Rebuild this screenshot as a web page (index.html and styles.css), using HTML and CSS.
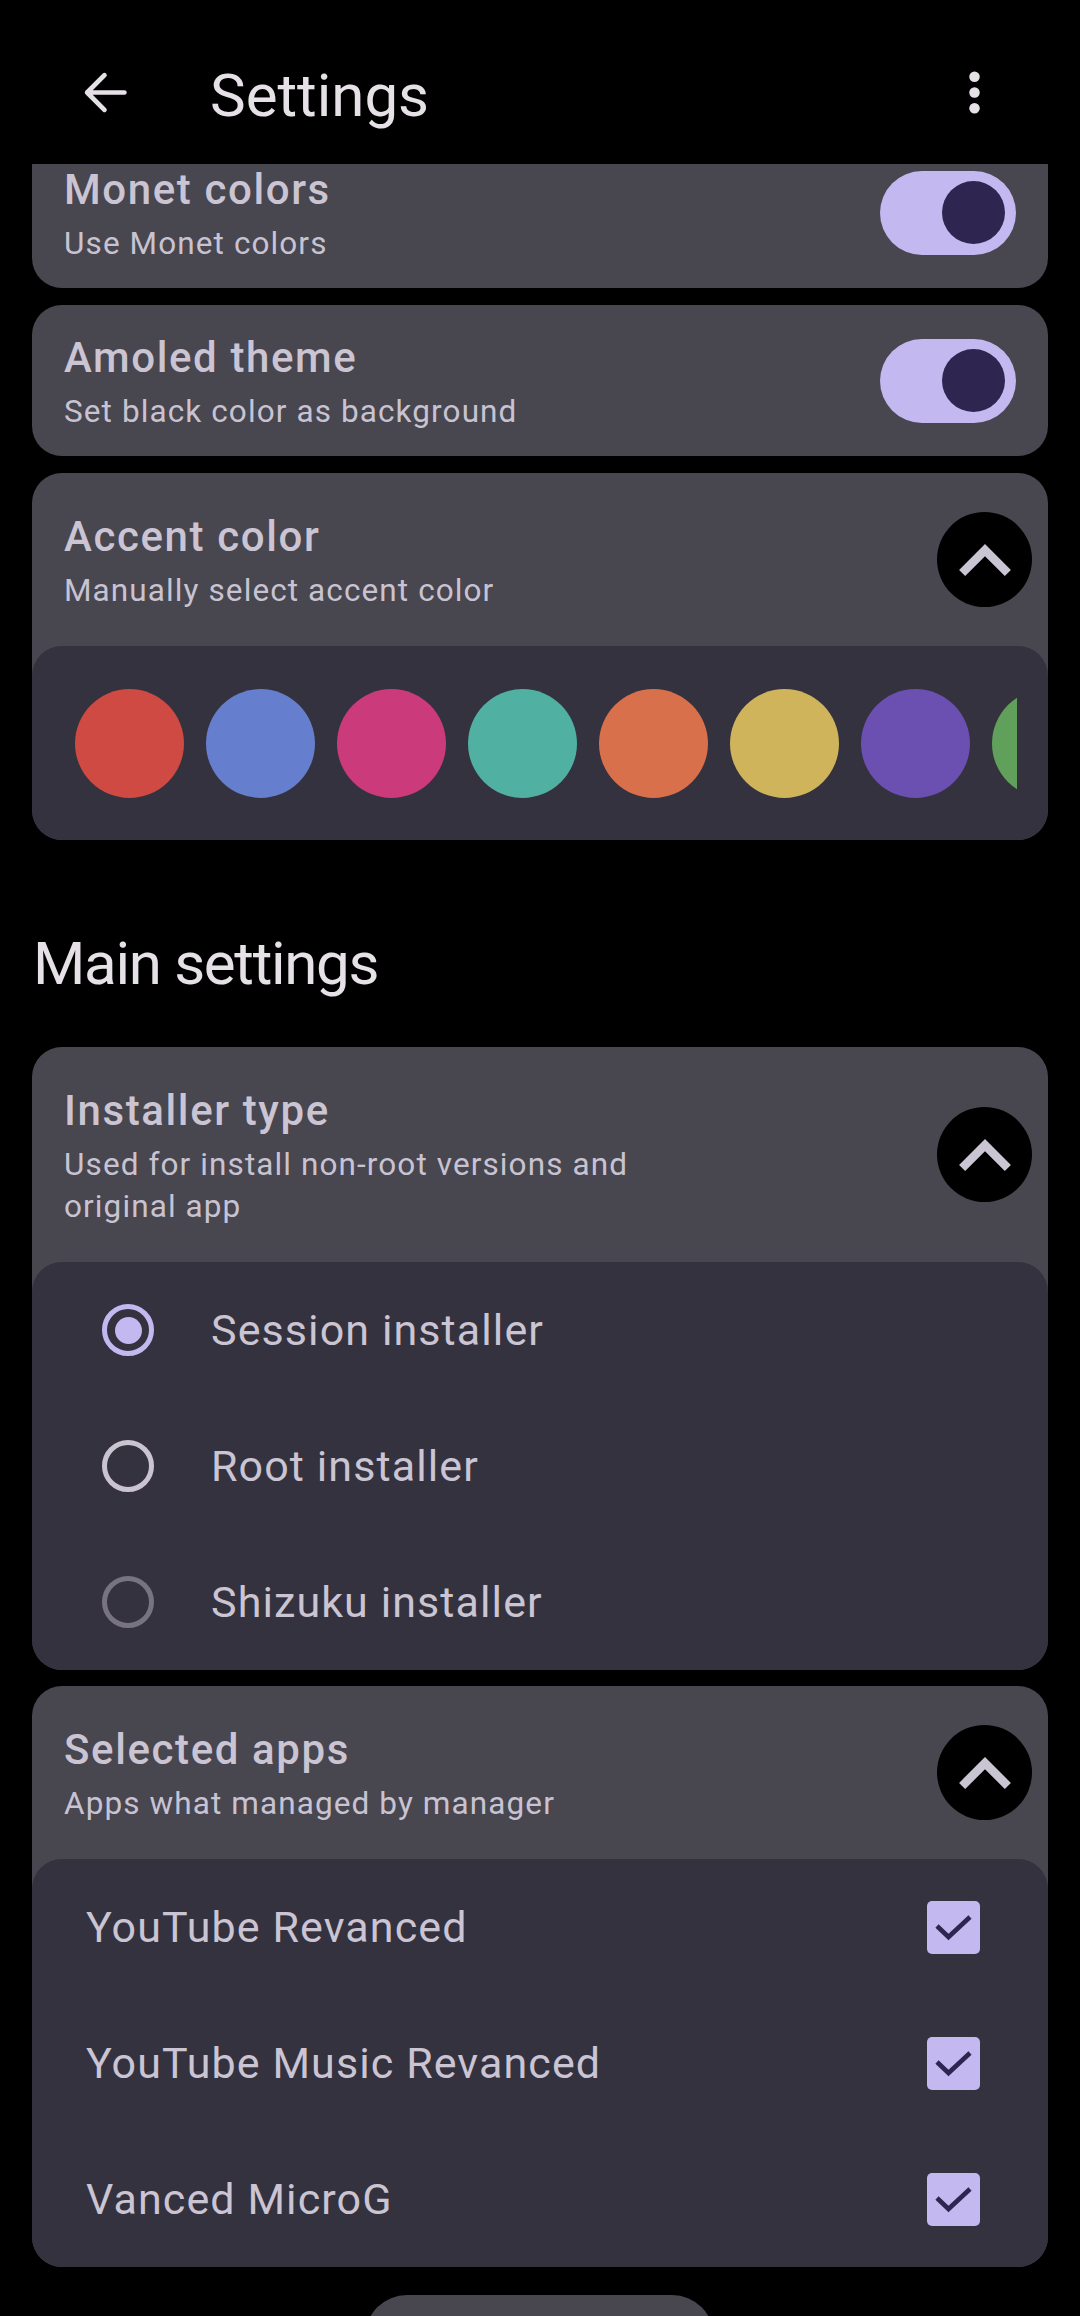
FILE: index.html
```html
<!DOCTYPE html>
<html lang="en">
<head>
<meta charset="utf-8">
<title>Settings</title>
<link rel="stylesheet" href="styles.css">
</head>
<body>
<div class="screen">
  <header class="topbar">
    <div class="icon-btn back">
      <svg width="63" height="63" viewBox="0 0 24 24"><path d="M19.2 12H5 M11.6 18.6L5 12l6.6-6.6" fill="none" stroke="#E6E1E6" stroke-width="1.8" stroke-linecap="round" stroke-linejoin="round"/></svg>
    </div>
    <h1 class="title">Settings</h1>
    <div class="icon-btn more">
      <svg width="63" height="63" viewBox="0 0 24 24"><circle cx="12" cy="6" r="2" fill="#E6E1E6"/><circle cx="12" cy="12" r="2" fill="#E6E1E6"/><circle cx="12" cy="18" r="2" fill="#E6E1E6"/></svg>
    </div>
  </header>

  <main class="viewport">
    <div class="scroll">
      <section class="group group-top">
        <div class="card switch-card">
          <div class="texts">
            <div class="item-title">Monet colors</div>
            <div class="item-sub">Use Monet colors</div>
          </div>
          <div class="switch"><span class="thumb"></span></div>
        </div>

        <div class="card switch-card">
          <div class="texts">
            <div class="item-title">Amoled theme</div>
            <div class="item-sub">Set black color as background</div>
          </div>
          <div class="switch"><span class="thumb"></span></div>
        </div>

        <div class="card">
          <div class="expand-head">
            <div class="texts">
              <div class="item-title">Accent color</div>
              <div class="item-sub">Manually select accent color</div>
            </div>
            <div class="chev-btn">
              <svg width="52" height="32" viewBox="6 8 12 7.41"><path d="M12 8l-6 6 1.41 1.41L12 10.83l4.59 4.58L18 14z" fill="#CAC5D3"/></svg>
            </div>
          </div>
          <div class="panel swatch-panel">
            <div class="swatch-clip">
              <div class="swatch-row">
                <span class="swatch sw-red"></span>
                <span class="swatch sw-blue"></span>
                <span class="swatch sw-pink"></span>
                <span class="swatch sw-teal"></span>
                <span class="swatch sw-orange"></span>
                <span class="swatch sw-yellow"></span>
                <span class="swatch sw-purple"></span>
                <span class="swatch sw-green"></span>
              </div>
            </div>
          </div>
        </div>
      </section>

      <h2 class="section-title">Main settings</h2>

      <section class="group group-main">
        <div class="card">
          <div class="expand-head">
            <div class="texts">
              <div class="item-title">Installer type</div>
              <div class="item-sub">Used for install non-root versions and original app</div>
            </div>
            <div class="chev-btn">
              <svg width="52" height="32" viewBox="6 8 12 7.41"><path d="M12 8l-6 6 1.41 1.41L12 10.83l4.59 4.58L18 14z" fill="#CAC5D3"/></svg>
            </div>
          </div>
          <div class="panel list-panel">
            <div class="radio-row">
              <span class="radio checked"><span class="dot"></span></span>
              <span class="row-label">Session installer</span>
            </div>
            <div class="radio-row">
              <span class="radio"></span>
              <span class="row-label">Root installer</span>
            </div>
            <div class="radio-row">
              <span class="radio dim"></span>
              <span class="row-label">Shizuku installer</span>
            </div>
          </div>
        </div>

        <div class="card">
          <div class="expand-head">
            <div class="texts">
              <div class="item-title">Selected apps</div>
              <div class="item-sub">Apps what managed by manager</div>
            </div>
            <div class="chev-btn">
              <svg width="52" height="32" viewBox="6 8 12 7.41"><path d="M12 8l-6 6 1.41 1.41L12 10.83l4.59 4.58L18 14z" fill="#CAC5D3"/></svg>
            </div>
          </div>
          <div class="panel list-panel">
            <div class="check-row">
              <span class="row-label">YouTube Revanced</span>
              <span class="checkbox"><svg width="53" height="53" viewBox="0 0 53 53"><path d="M10 25L21.5 36L43 16" fill="none" stroke="#2E2650" stroke-width="4.6"/></svg></span>
            </div>
            <div class="check-row">
              <span class="row-label">YouTube Music Revanced</span>
              <span class="checkbox"><svg width="53" height="53" viewBox="0 0 53 53"><path d="M10 25L21.5 36L43 16" fill="none" stroke="#2E2650" stroke-width="4.6"/></svg></span>
            </div>
            <div class="check-row">
              <span class="row-label">Vanced MicroG</span>
              <span class="checkbox"><svg width="53" height="53" viewBox="0 0 53 53"><path d="M10 25L21.5 36L43 16" fill="none" stroke="#2E2650" stroke-width="4.6"/></svg></span>
            </div>
          </div>
        </div>
      </section>
    </div>
  </main>

  <div class="bottom-pill"></div>
</div>
</body>
</html>
```

FILE: styles.css
```css
* { box-sizing: border-box; }

html, body {
  margin: 0;
  padding: 0;
  background: #000;
}

body {
  width: 1080px;
  height: 2316px;
  overflow: hidden;
  font-family: Roboto, "Liberation Sans", sans-serif;
  color: #CAC4D3;
}

.screen {
  position: relative;
  width: 1080px;
  height: 2316px;
  display: flex;
  flex-direction: column;
  overflow: hidden;
}

/* ---------- top bar ---------- */
.topbar {
  flex: 0 0 164px;
  display: flex;
  align-items: center;
  padding-top: 20px;
  background: #000;
  position: relative;
  z-index: 2;
}

.icon-btn {
  width: 63px;
  height: 63px;
  display: flex;
}

.back { margin-left: 74px; }
.more { margin-left: auto; margin-right: 74px; }

.title {
  margin: 0 0 0 73px;
  padding-top: 8px;
  font-size: 60px;
  line-height: 68px;
  font-weight: 400;
  color: #E6E1E6;
}

/* ---------- scrolling content ---------- */
.viewport {
  flex: 1 1 auto;
  overflow: hidden;
}

.scroll {
  margin-top: -27px;
  padding: 0 32px;
}

.group {
  display: flex;
  flex-direction: column;
}

.group-top { gap: 17px; }
.group-main { gap: 16px; }

.card {
  background: #48464F;
  border-radius: 30px;
  overflow: hidden;
}

.switch-card {
  display: flex;
  align-items: center;
  justify-content: space-between;
  padding: 23px 32px;
}

.texts {
  display: flex;
  flex-direction: column;
  max-width: 660px;
}

.item-title {
  font-size: 42px;
  line-height: 59px;
  margin-bottom: 4px;
  font-weight: 500;
  letter-spacing: 1.6px;
  color: #CAC4D3;
}

.item-sub {
  font-size: 31.5px;
  line-height: 42px;
  font-weight: 400;
  letter-spacing: 1.1px;
  color: #C8C3D2;
}

/* switch */
.switch {
  position: relative;
  width: 136px;
  height: 84px;
  border-radius: 42px;
  background: #C4B8F0;
  flex: 0 0 auto;
}

.thumb {
  position: absolute;
  right: 11px;
  top: 10.5px;
  width: 63px;
  height: 63px;
  border-radius: 50%;
  background: #2E2650;
}

/* expandable header */
.expand-head {
  display: flex;
  align-items: center;
  justify-content: space-between;
  padding: 34px 16px 34px 32px;
}

.chev-btn {
  width: 95px;
  height: 95px;
  border-radius: 50%;
  background: #000;
  display: flex;
  align-items: center;
  justify-content: center;
  flex: 0 0 auto;
}

.panel {
  background: #34323E;
  border-radius: 30px;
}

/* swatches */
.swatch-panel {
  height: 194px;
  display: flex;
  align-items: center;
  padding: 0 31px;
}

.swatch-clip {
  width: 100%;
  overflow: hidden;
}

.swatch-row {
  display: flex;
  gap: 22px;
  padding-left: 12px;
}

.swatch {
  flex: 0 0 109px;
  width: 109px;
  height: 109px;
  border-radius: 50%;
}

.sw-red { background: #CF4A43; }
.sw-blue { background: #657ECE; }
.sw-pink { background: #CB3B7B; }
.sw-teal { background: #50B0A2; }
.sw-orange { background: #D9704C; }
.sw-yellow { background: #CFB45C; }
.sw-purple { background: #6B4FB1; }
.sw-green { background: #60A05A; }

/* section title */
.section-title {
  margin: 94px 0 53px 1px;
  font-size: 60px;
  line-height: 60px;
  font-weight: 400;
  letter-spacing: -1.3px;
  color: #E6E1E6;
}

/* list rows */
.radio-row,
.check-row {
  height: 136px;
  display: flex;
  align-items: center;
}

.radio-row { padding-left: 70px; gap: 57px; }

.check-row {
  padding: 0 68px 0 54px;
  justify-content: space-between;
}

.row-label {
  font-size: 43px;
  font-weight: 400;
  letter-spacing: 1.1px;
  color: #CAC4D3;
}

.radio {
  width: 52px;
  height: 52px;
  border-radius: 50%;
  border: 5px solid #CAC4D0;
  display: flex;
  align-items: center;
  justify-content: center;
  flex: 0 0 auto;
}

.radio.checked { border-color: #C4B8F0; }
.radio.dim { border-color: #77737F; }

.radio .dot {
  width: 27px;
  height: 27px;
  border-radius: 50%;
  background: #C4B8F0;
}

.checkbox {
  width: 53px;
  height: 53px;
  border-radius: 5px;
  background: #C4B8F0;
  display: flex;
  flex: 0 0 auto;
}

/* floating bottom pill */
.bottom-pill {
  position: absolute;
  left: 365px;
  top: 2295px;
  width: 349px;
  height: 84px;
  border-radius: 42px;
  background: #48464F;
}
```
